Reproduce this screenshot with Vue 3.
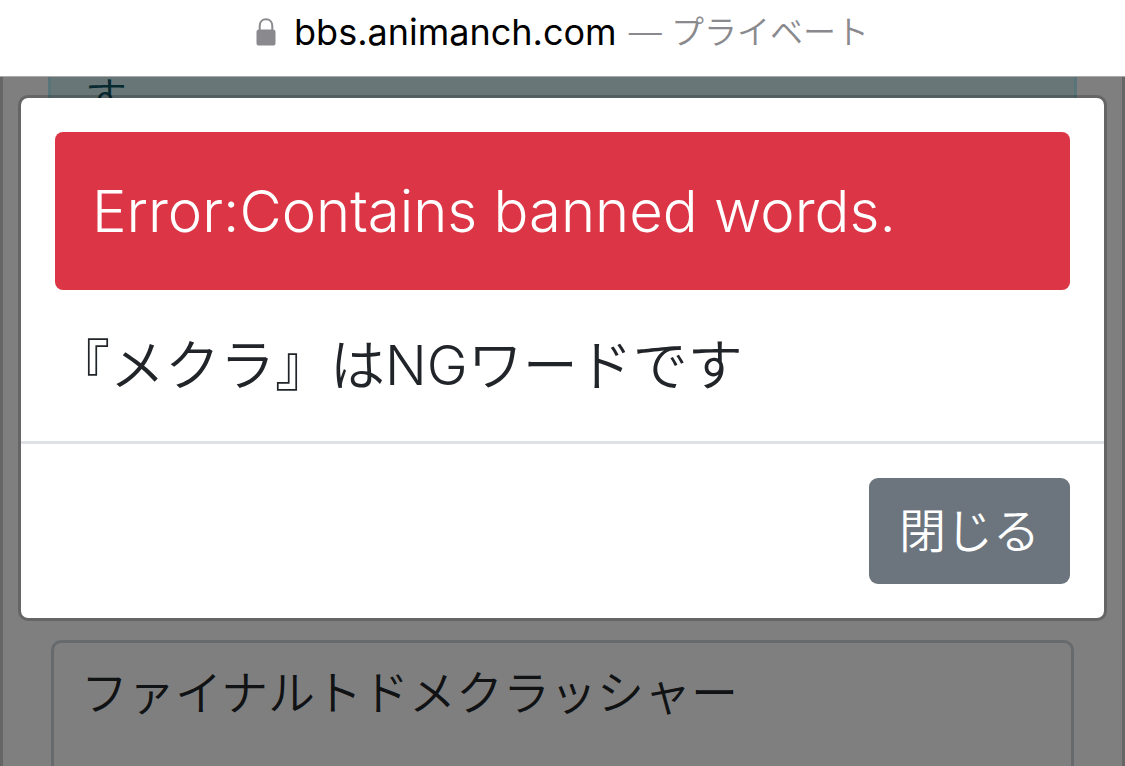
<script setup>
import { ref } from 'vue'

const open = ref(true)
const draft = ref('ファイナルトドメクラッシャー')
</script>

<template>
  <div class="browser">
    <header class="address-bar">
      <svg class="lock" viewBox="0 0 20 28" aria-hidden="true">
        <path d="M3.7 13V8C3.7 4 6.2 1.2 10 1.2S16.3 4 16.3 8V13" fill="none" stroke="#8a8a8e" stroke-width="2" />
        <rect x="0.5" y="11.5" width="19" height="16" rx="2.6" fill="#8a8a8e" />
      </svg>
      <span class="host">bbs.animanch.com</span>
      <span class="mode">— プライベート</span>
    </header>

    <div class="viewport">
      <main class="page">
        <div class="notice">す</div>
        <textarea v-model="draft" class="comment" aria-label="コメント"></textarea>
      </main>

      <div v-if="open" class="backdrop">
        <section class="dialog" role="dialog" aria-modal="true" aria-labelledby="dialog-title">
          <div class="dialog-body">
            <div id="dialog-title" class="alert">Error:Contains banned words.</div>
            <p class="message">『メクラ』はNGワードです</p>
          </div>
          <footer class="dialog-footer">
            <button type="button" class="close" @click="open = false">閉じる</button>
          </footer>
        </section>
      </div>
    </div>
  </div>
</template>

<style>
body {
  margin: 0;
}
</style>

<style scoped>
.browser {
  display: flex;
  flex-direction: column;
  height: 100vh;
  overflow: hidden;
  box-sizing: border-box;
  background: #fff;
  font-family: Inter, "Noto Sans CJK JP", sans-serif;
  font-weight: 350;
  color: #212529;
}

.address-bar {
  display: flex;
  flex: none;
  align-items: center;
  justify-content: center;
  height: 64px;
  padding-bottom: 12px;
  border-bottom: 1px solid #aaa;
  line-height: 48px;
  white-space: nowrap;
}

.lock {
  width: 20px;
  height: 28px;
  margin-right: 18px;
}

.host {
  margin-right: 12px;
  font-size: 36px;
  font-weight: 370;
  color: #000;
}

.mode {
  font-size: 33px;
  color: #8a8a8e;
}

.viewport {
  position: relative;
  flex: 1;
  min-height: 0;
  overflow: hidden;
}

.page {
  display: flex;
  flex-direction: column;
  gap: 40px;
  height: 800px;
  padding: 0 45px;
  border: solid #ccc;
  border-width: 0 3px;
}

.notice {
  flex: none;
  box-sizing: border-box;
  height: 523px;
  padding: 0 34px;
  border: solid #b2ebf2;
  border-width: 0 3px;
  background: #d1ecf1;
  font-size: 42px;
  line-height: 42px;
  color: #0c5460;
}

.comment {
  flex: 1;
  margin: 0 3px;
  padding: 14px 27px;
  border: 3px solid #ced4da;
  border-radius: 10px;
  background: #fff;
  font: inherit;
  font-size: 47px;
  line-height: 71px;
  color: #212529;
  resize: none;
  outline: none;
}

.backdrop {
  position: absolute;
  inset: 0;
  padding: 18px;
  background: rgba(0, 0, 0, 0.5);
}

.dialog {
  border: 3px solid rgba(0, 0, 0, 0.2);
  border-radius: 10px;
  background: #fff;
  background-clip: padding-box;
}

.dialog-body {
  padding: 34px;
}

.alert {
  margin-bottom: 34px;
  padding: 37px;
  border-radius: 8px;
  background: #dc3545;
  font-size: 58px;
  line-height: 84px;
  color: #fff;
}

.message {
  margin: 0;
  font-size: 55px;
  line-height: 83px;
}

.dialog-footer {
  display: flex;
  justify-content: flex-end;
  padding: 34px;
  border-top: 3px solid #dee2e6;
}

.close {
  padding: 17px 30px;
  border: 0;
  border-radius: 9px;
  background: #6c757d;
  font: inherit;
  font-size: 47px;
  line-height: 72px;
  color: #fff;
}
</style>
